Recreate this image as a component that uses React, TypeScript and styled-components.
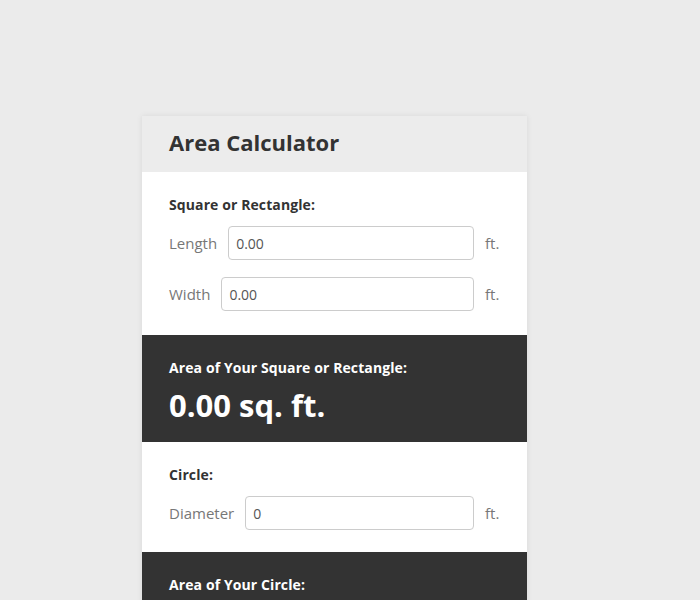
import React, { useState } from "react";
import styled, { createGlobalStyle } from "styled-components";

const GlobalStyle = createGlobalStyle`
  html, body {
    margin: 0;
    padding: 0;
    background: #ebebeb;
    font-family: "Open Sans", "Noto Sans", Arial, sans-serif;
  }
`;

export default function App() {
  const [length, setLength] = useState("0.00");
  const [width, setWidth] = useState("0.00");
  const [diameter, setDiameter] = useState("0");

  const rectArea = (parseFloat(length) || 0) * (parseFloat(width) || 0);
  const d = parseFloat(diameter) || 0;
  const circleArea = Math.PI * (d / 2) * (d / 2);

  return (
    <Page>
      <GlobalStyle />
      <Card>
        <Header>
          <Title>Area Calculator</Title>
        </Header>

        <Section $bottom={24}>
          <SectionTitle>Square or Rectangle:</SectionTitle>
          <Row>
            <Label>Length</Label>
            <Input value={length} onChange={(e) => setLength(e.target.value)} />
            <Unit>ft.</Unit>
          </Row>
          <Row>
            <Label>Width</Label>
            <Input value={width} onChange={(e) => setWidth(e.target.value)} />
            <Unit>ft.</Unit>
          </Row>
        </Section>

        <Result>
          <ResultTitle>Area of Your Square or Rectangle:</ResultTitle>
          <ResultValue>{rectArea.toFixed(2)} sq. ft.</ResultValue>
        </Result>

        <Section $bottom={22}>
          <SectionTitle>Circle:</SectionTitle>
          <Row>
            <Label>Diameter</Label>
            <Input value={diameter} onChange={(e) => setDiameter(e.target.value)} />
            <Unit>ft.</Unit>
          </Row>
        </Section>

        <Result>
          <ResultTitle>Area of Your Circle:</ResultTitle>
          <ResultValue>{circleArea.toFixed(2)} sq. ft.</ResultValue>
        </Result>
      </Card>
    </Page>
  );
}

const Page = styled.div`
  padding: 116px 0 40px 142px;
`;

const Card = styled.div`
  width: 385px;
  background: #fff;
  box-shadow: 0 0 6px rgba(0, 0, 0, 0.08);
`;

const Header = styled.div`
  background: #ececec;
  height: 56px;
  box-sizing: border-box;
  display: flex;
  align-items: center;
  padding: 0 27px 4px;
`;

const Title = styled.h1`
  margin: 0;
  font-size: 22px;
  font-weight: 700;
  color: #333;
`;

const Section = styled.div<{ $bottom: number }>`
  padding: 23px 28px ${(p) => p.$bottom}px 27px;
  display: flex;
  flex-direction: column;
  gap: 17px;
`;

const SectionTitle = styled.div`
  font-size: 14px;
  line-height: 20px;
  font-weight: 700;
  color: #333;
  letter-spacing: 0.1px;
  margin-bottom: -6px;
`;

const Row = styled.div`
  display: flex;
  align-items: center;
  gap: 11px;
`;

const Label = styled.span`
  font-size: 15px;
  color: #777;
`;

const Input = styled.input`
  flex: 1;
  min-width: 0;
  height: 34px;
  box-sizing: border-box;
  border: 1px solid #ccc;
  border-radius: 4px;
  padding: 0 7px;
  font-family: inherit;
  font-size: 14px;
  color: #555;
  outline: none;
`;

const Unit = styled.span`
  font-size: 15px;
  color: #777;
  width: 14px;
`;

const Result = styled.div`
  background: #333;
  color: #fff;
  padding: 23px 27px 18px;
`;

const ResultTitle = styled.div`
  font-size: 14px;
  line-height: 20px;
  font-weight: 700;
  letter-spacing: 0.1px;
`;

const ResultValue = styled.div`
  font-size: 31px;
  line-height: 38px;
  font-weight: 700;
  margin-top: 8px;
`;
